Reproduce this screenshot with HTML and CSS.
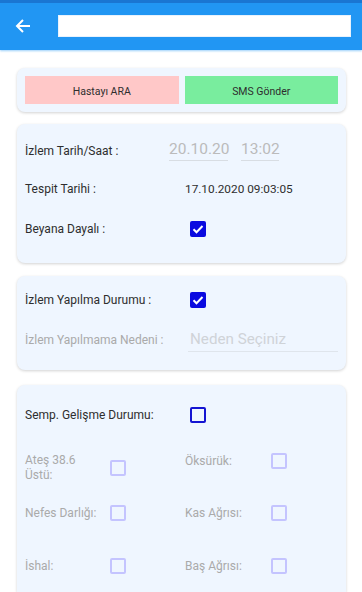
FILE: index.html
```html
<!DOCTYPE html>
<html lang="tr">
<head>
<meta charset="utf-8">
<title>İzlem</title>
<link rel="stylesheet" href="styles.css">
</head>
<body>
<header class="appbar">
  <div class="status"></div>
  <div class="toolbar">
    <button class="back" aria-label="Geri">
      <svg width="16" height="16" viewBox="0 0 16 16"><path d="M15 8H2M8 2L2 8l6 6" fill="none" stroke="#fff" stroke-width="2"/></svg>
    </button>
    <div class="search"></div>
  </div>
</header>
<main class="content">
  <section class="card actions">
    <button class="btn btn-call">Hastayı ARA</button>
    <button class="btn btn-sms">SMS Gönder</button>
  </section>

  <section class="card info">
    <div class="row r1">
      <span class="label">İzlem Tarih/Saat :</span>
      <div class="dt">
        <span class="field date">20.10.20</span>
        <span class="field time">13:02</span>
      </div>
    </div>
    <div class="row r2">
      <span class="label">Tespit Tarihi :</span>
      <span class="value">17.10.2020 09:03:05</span>
    </div>
    <div class="row r3">
      <span class="label">Beyana Dayalı :</span>
      <span class="cb checked"><svg width="16" height="16" viewBox="0 0 16 16"><path d="M3.5 8.2l3 3 6-6.2" fill="none" stroke="#fff" stroke-width="2"/></svg></span>
    </div>
  </section>

  <section class="card status-card">
    <div class="row s1">
      <span class="label">İzlem Yapılma Durumu :</span>
      <span class="cb checked"><svg width="16" height="16" viewBox="0 0 16 16"><path d="M3.5 8.2l3 3 6-6.2" fill="none" stroke="#fff" stroke-width="2"/></svg></span>
    </div>
    <div class="row s2">
      <span class="label muted">İzlem Yapılmama Nedeni :</span>
      <span class="select">Neden Seçiniz</span>
    </div>
  </section>

  <section class="card symptoms">
    <div class="row p1">
      <span class="label">Semp. Gelişme Durumu:</span>
      <span class="cb empty"></span>
    </div>
    <div class="grid">
      <div class="cell"><span class="slabel">Ateş 38.6 Üstü:</span><span class="cb disabled"></span></div>
      <div class="cell"><span class="slabel">Öksürük:</span><span class="cb disabled"></span></div>
      <div class="cell"><span class="slabel">Nefes Darlığı:</span><span class="cb disabled"></span></div>
      <div class="cell"><span class="slabel">Kas Ağrısı:</span><span class="cb disabled"></span></div>
      <div class="cell"><span class="slabel">İshal:</span><span class="cb disabled"></span></div>
      <div class="cell"><span class="slabel">Baş Ağrısı:</span><span class="cb disabled"></span></div>
    </div>
  </section>
</main>
</body>
</html>
```

FILE: styles.css
```css
* { box-sizing: border-box; }
html, body { margin: 0; padding: 0; }
body {
  width: 362px;
  height: 592px;
  overflow: hidden;
  background: #fff;
  font-family: Roboto, "Noto Sans", sans-serif;
  color: #2e2e2e;
}
.appbar { box-shadow: 0 1px 2px rgba(33,150,243,0.45); }
.status { height: 3px; background: #1a76d2; }
.toolbar {
  height: 47px;
  background: #2196f3;
  display: flex;
  align-items: center;
  padding: 0 11px 0 15px;
}
.back {
  border: 0; background: none; padding: 0;
  width: 16px; height: 16px;
  display: flex;
  margin-top: -1px;
}
.search {
  margin-left: 27px;
  flex: 1;
  height: 22px;
  margin-top: -1px;
  background: #fff;
  border: 1px solid #e8f2fd;
}
.content { padding: 18px 16px 0 17px; }
.card {
  background: #eff6ff;
  border-radius: 8px;
  box-shadow: 0 1px 3px rgba(0,0,0,0.18);
}
.actions {
  height: 44px;
  padding: 8px;
  display: flex;
  gap: 6px;
}
.btn {
  flex: 1;
  border: 0;
  border-radius: 0;
  font-family: Roboto, sans-serif;
  font-size: 10.5px;
  color: #2e2e2e;
  padding: 3px 0 0;
}
.btn-call { background: #ffc8c8; }
.btn-sms { background: #79ed9e; }

.info { margin-top: 12px; padding: 8px 8px 13px; }
.row { display: flex; align-items: center; }
.label { font-size: 12px; width: 165px; flex: none; }
.muted { color: #aaa; }
.r1 { height: 38px; }
.r2 { height: 38px; }
.r3 { height: 42px; }
.dt { display: flex; gap: 13px; margin-left: -21px; margin-top: -2px; }
.field {
  font-size: 15.5px;
  color: #bbb;
  border-bottom: 1px solid #d8dde3;
  padding-bottom: 2px;
}
.date { width: 59px; }
.time { width: 38px; }
.value { font-size: 11.8px; margin-left: -5px; }
.cb {
  width: 16px; height: 16px;
  flex: none;
  border-radius: 2px;
  display: flex;
}
.checked { background: #0a0ae0; }
.empty { border: 2px solid #1414d2; }
.disabled { border: 2px solid #c4c4ff; }

.status-card { margin-top: 13px; padding: 4px 8px 10px; }
.s1, .s2 { height: 40px; }
.s2 .label { color: #aaa; width: 163px; }
.select {
  font-size: 15.2px;
  color: #cfd3d8;
  width: 150px;
  padding-left: 2px;
  border-bottom: 1px solid #dfe5ec;
  padding-bottom: 3px;
  margin-top: 2px;
}

.symptoms { margin-top: 15px; padding: 10px 8px 0; height: 207px; border-radius: 8px 8px 0 0; }
.p1 { height: 40px; }
.grid {
  margin-top: 18px;
  display: grid;
  grid-template-columns: 160px 1fr;
  grid-template-rows: 52px 53px 53px;
  align-items: start;
}
.cell { display: flex; align-items: center; }
.slabel {
  font-size: 12px;
  color: #aaa;
  width: 85px;
  line-height: 15px;
  flex: none;
}
.cell:first-child .slabel { padding-right: 20px; }
.cell:nth-child(2n) .slabel { width: 86px; }
```
